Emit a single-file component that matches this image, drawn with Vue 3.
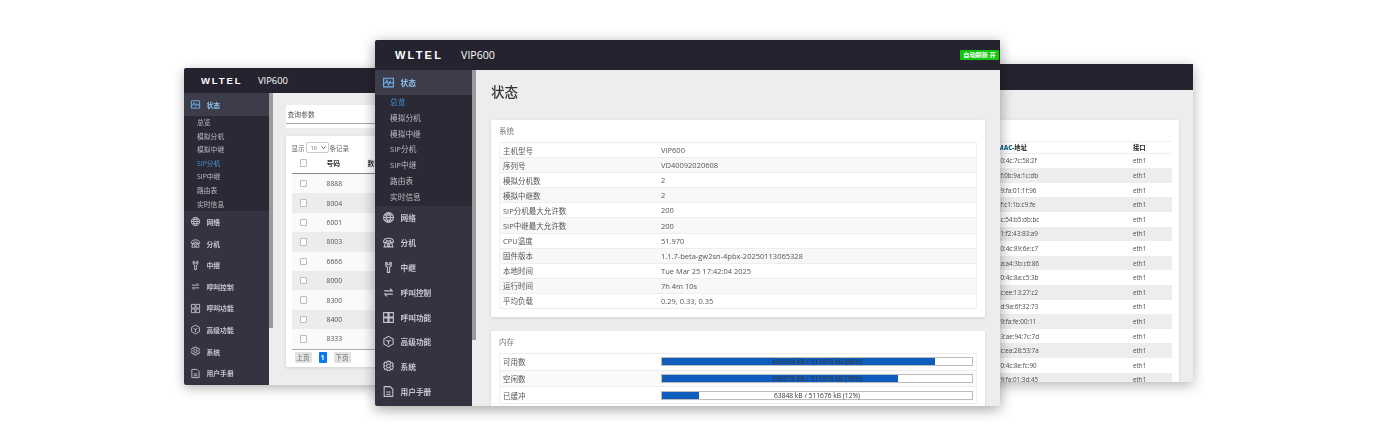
<script setup>
const subItems = ['总览', '模拟分机', '模拟中继', 'SIP分机', 'SIP中继', '路由表', '实时信息']
const navItems = [
  { label: '网络', icon: 'globe' },
  { label: '分机', icon: 'phone' },
  { label: '中继', icon: 'trunk' },
  { label: '呼叫控制', icon: 'swap' },
  { label: '呼叫功能', icon: 'grid' },
  { label: '高级功能', icon: 'cube' },
  { label: '系统', icon: 'gear' },
  { label: '用户手册', icon: 'doc' },
]
const iconPaths = {
  status: 'M3 4h18v16H3z M3 13h4l2-5 3 8 3-6 1.500 3H21',
  globe: 'M12 3a9 9 0 1 0 0 18a9 9 0 1 0 0-18z M12 3c-5 5-5 13 0 18 M12 3c5 5 5 13 0 18 M3 12h18 M5 7.500h14 M5 16.500h14',
  phone: 'M3 10c0-3.500 4-6 9-6s9 2.500 9 6v2h-5V9H8v3H3z M6 13h12l2 7H4z M12 14.500a2 2 0 1 0 0 4a2 2 0 1 0 0-4z',
  trunk: 'M7 3v6l3 2v10h4V11l3-2V3h-2.500v4h-5V3z',
  swap: 'M4 9h15l-4-4 M20 15H5l4 4',
  grid: 'M3 3h8v8H3z M13 3h8v8h-8z M3 13h8v8H3z M13 13h8v8h-8z',
  cube: 'M12 2.500l8.500 4.800v9.400L12 21.500l-8.500-4.800V7.300z M12 12L7.500 9.500 M12 12l4.500-2.500 M12 12v5.500',
  gear: 'M9.500 2.500h5l1 3 3-1 2.500 4.300-2.300 2.200 2.300 2.200-2.500 4.300-3-1-1 3h-5l-1-3-3 1L3 12.700 5.300 10.500 3 8.300l2.500-4.300 3 1z M12 7.500a3.500 3.500 0 1 0 0 7a3.500 3.500 0 1 0 0-7z',
  doc: 'M4 3h11l5 5v13H4z M8 13h8 M8 17h8',
}
const sideWindows = [
  { key: 'back', activeSub: 'SIP分机' },
  { key: 'front', activeSub: '总览' },
]

const numbers = ['8888', '8004', '6001', '8003', '6666', '8000', '8300', '8400', '8333']

const systemRows = [
  ['主机型号', 'VIP600'],
  ['序列号', 'VD40092020608'],
  ['模拟分机数', '2'],
  ['模拟中继数', '2'],
  ['SIP分机最大允许数', '200'],
  ['SIP中继最大允许数', '200'],
  ['CPU温度', '51.970'],
  ['固件版本', '1.1.7-beta-gw2sn-4pbx-20250113065328'],
  ['本地时间', 'Tue Mar 25 17:42:04 2025'],
  ['运行时间', '7h 4m 10s'],
  ['平均负载', '0.29, 0.33, 0.35'],
]
const memoryRows = [
  { label: '可用数', used: 453924, pct: 88 },
  { label: '空闲数', used: 390076, pct: 76 },
  { label: '已缓冲', used: 63848, pct: 12 },
]
const macs = [
  '00:e0:4c:7c:58:2f', '00:1f:0b:9a:1c:db', '00:19:fa:01:1f:96', '00:1f:c1:1b:c9:fe',
  '00:1c:54:b5:db:bc', '00:21:f2:43:83:a9', '00:e0:4c:89:6e:c7', '00:1a:a4:3b:c6:86',
  '00:e0:4c:8a:c5:3b', '00:1c:ee:13:27:c2', '00:1d:9a:6f:32:73', '00:19:fa:fe:00:11',
  '00:13:ae:94:7c:7d', '00:1c:ea:28:53:7a', '00:e0:4c:8e:fc:90', '00:19:fa:01:3d:45',
]
</script>

<template>
  <main class="stage">
    <!-- right window, mostly behind the front one -->
    <section class="win win-right">
      <header class="topbar"></header>
      <div class="right-body">
        <div class="card right-card">
          <div class="mac-row mac-head">
            <span><b class="mac-word">MAC</b>-地址</span>
            <span>接口</span>
          </div>
          <div v-for="m in macs" :key="m" class="mac-row">
            <span>{{ m }}</span>
            <span>eth1</span>
          </div>
        </div>
      </div>
    </section>

    <section v-for="w in sideWindows" :key="w.key" class="win" :class="'win-' + w.key">
      <header class="topbar">
        <span class="brand">WLTEL</span>
        <span class="model">VIP600</span>
        <span v-if="w.key === 'front'" class="refresh">自动刷新 开</span>
      </header>
      <div class="body">
        <aside class="side">
          <nav class="menu">
            <div class="nav-item active-group">
              <svg class="icon status" viewBox="0 0 24 24"><path :d="iconPaths.status" /></svg>
              <span>状态</span>
            </div>
            <div class="sub">
              <a v-for="s in subItems" :key="s" class="sub-item" :class="{ on: s === w.activeSub }">{{ s }}</a>
            </div>
            <div v-for="n in navItems" :key="n.label" class="nav-item">
              <svg class="icon" viewBox="0 0 24 24"><path :d="iconPaths[n.icon]" /></svg>
              <span>{{ n.label }}</span>
            </div>
          </nav>
          <div class="scroll-track"><div class="scroll-thumb"></div></div>
        </aside>

        <div v-if="w.key === 'back'" class="content back-content">
          <div class="query">
            <div class="query-title">查询参数</div>
          </div>
          <div class="card list-card">
            <div class="list-tools">
              <span>显示</span>
              <span class="page-size">10
                <svg viewBox="0 0 10 6"><path d="M1 1l4 4 4-4" /></svg>
              </span>
              <span>条记录</span>
            </div>
            <div class="num-row num-head">
              <i class="check"></i><b>号码</b><b>数字</b>
            </div>
            <div v-for="n in numbers" :key="n" class="num-row">
              <i class="check"></i><span>{{ n }}</span><span></span>
            </div>
            <div class="pager">
              <span class="page-btn">上页</span>
              <span class="page-cur">1</span>
              <span class="page-btn">下页</span>
            </div>
          </div>
        </div>

        <div v-else class="content front-content">
          <h1 class="title">状态</h1>
          <div class="card info-card">
            <div class="card-title">系统</div>
            <div class="kv-table">
              <div v-for="r in systemRows" :key="r[0]" class="kv-row">
                <span>{{ r[0] }}</span>
                <span>{{ r[1] }}</span>
              </div>
            </div>
          </div>
          <div class="card mem-card">
            <div class="card-title">内存</div>
            <div class="kv-table">
              <div v-for="r in memoryRows" :key="r.label" class="kv-row mem-row">
                <span>{{ r.label }}</span>
                <div class="bar">
                  <div class="bar-fill" :style="{ width: r.pct + '%' }"></div>
                  <span class="bar-text">{{ r.used }} kB / 511676 kB ({{ r.pct }}%)</span>
                </div>
              </div>
            </div>
          </div>
        </div>
      </div>
    </section>
  </main>
</template>

<style>
html, body {
  background: #fff;
}
</style>

<style scoped>
.stage {
  position: relative;
  width: 1380px;
  height: 440px;
  overflow: hidden;
  background: #fff;
  font-family: "Open Sans", "Noto Sans CJK SC", sans-serif;
  color: #444;
}

/* the three screenshots sit on a free canvas */
.win {
  position: absolute;
  display: flex;
  flex-direction: column;
  overflow: hidden;
  background: #ededed;
  box-shadow: 0 3px 12px rgba(0, 0, 0, 0.3);
  filter: blur(0.35px);
}
.win-back {
  left: 184px;
  top: 68px;
  width: 230px;
  height: 317px;
  border-radius: 2px 0 0 2px;
  --bar-h: 25px;
  --side-w: 85px;
  --scroll-w: 3.5px;
  --thumb-h: 235px;
  --nav-h: 21.600px;
  --active-h: 23px;
  --sub-h: 13.600px;
  --sub-pad: 0 0 0 13px;
  --nav-pad: 6px;
  --nav-gap: 5.500px;
  --icon: 11px;
  --side-font: 6.800px;
}
.win-front {
  left: 375px;
  top: 40px;
  width: 625px;
  height: 366px;
  z-index: 2;
  border-radius: 2px 0 0 2px;
  box-shadow: 0 3px 14px rgba(0, 0, 0, 0.38);
  --bar-h: 30px;
  --side-w: 97px;
  --scroll-w: 4px;
  --thumb-h: 270px;
  --nav-h: 24.800px;
  --active-h: 25px;
  --sub-h: 15.800px;
  --sub-pad: 0 0 0 15px;
  --nav-pad: 6.500px;
  --nav-gap: 6px;
  --icon: 13px;
  --side-font: 7.700px;
}
.win-right {
  left: 960px;
  top: 64px;
  width: 233px;
  height: 318px;
}

.topbar {
  flex: none;
  display: flex;
  align-items: center;
  height: var(--bar-h, 26px);
  background: #25232f;
  color: #fff;
}
.brand {
  font-family: "Liberation Sans", sans-serif;
  font-weight: 700;
}
.model {
  font-family: "Open Sans", sans-serif;
  font-weight: 500;
}
.win-back .brand { margin-left: 17px; font-size: 9.500px; letter-spacing: 1.900px; }
.win-back .model { margin-left: 15.500px; font-size: 9.400px; }
.win-front .brand { margin-left: 20px; font-size: 11px; letter-spacing: 2.200px; }
.win-front .model { margin-left: 18px; font-size: 10.600px; }
.refresh {
  flex: none;
  width: 39px;
  height: 10.500px;
  margin-left: auto;
  margin-right: 1px;
  line-height: 10.500px;
  text-align: center;
  border-radius: 1px;
  background: #13c70f;
  color: #fff;
  font-size: 6.200px;
  font-weight: 700;
  white-space: nowrap;
}

.body {
  flex: 1;
  display: flex;
  min-height: 0;
}
.side {
  flex: none;
  display: flex;
  width: calc(var(--side-w) + var(--scroll-w));
}
.menu {
  width: var(--side-w);
  background: #343341;
  color: #c6c6ce;
  font-size: var(--side-font);
}
.nav-item {
  display: flex;
  align-items: center;
  gap: var(--nav-gap);
  height: var(--nav-h);
  padding-left: var(--nav-pad);
  font-weight: 700;
  white-space: nowrap;
}
.active-group {
  height: var(--active-h);
  background: #3c3c4b;
  color: #8fc0ea;
}
.sub {
  background: #2a2a36;
}
.sub-item {
  display: block;
  height: var(--sub-h);
  line-height: var(--sub-h);
  padding: var(--sub-pad);
  color: #bcbcc4;
  white-space: nowrap;
}
.sub-item.on {
  color: #4d90cf;
}
.icon {
  flex: none;
  width: var(--icon);
  height: var(--icon);
  fill: none;
  stroke: #c4c4cc;
  stroke-width: 2;
}
.icon.status {
  stroke: #6db7ef;
}
.scroll-track {
  width: var(--scroll-w);
  background: #ededed;
}
.scroll-thumb {
  height: var(--thumb-h);
  background: #9a9a9a;
}

.content {
  flex: 1;
  min-width: 0;
  overflow: hidden;
}
.card {
  background: #fff;
  box-shadow: 0 1px 3px rgba(0, 0, 0, 0.12);
}

/* back left window */
.back-content {
  padding: 12px 0 0 13px;
  font-size: 6.800px;
}
.query {
  width: 200px;
  height: 23px;
  background: #fff;
}
.query-title {
  height: 17.500px;
  line-height: 20px;
  padding-left: 2px;
  border-bottom: 1px solid #aaa;
  color: #555;
}
.list-card {
  width: 200px;
  height: 231px;
  margin-top: 8px;
  padding: 6px 0 0 6px;
  box-sizing: border-box;
}
.list-tools {
  display: flex;
  align-items: center;
  gap: 1px;
  height: 11px;
  color: #666;
  font-size: 6.500px;
}
.page-size {
  display: flex;
  align-items: center;
  justify-content: space-between;
  width: 23px;
  height: 11px;
  padding: 0 2px 0 4px;
  box-sizing: border-box;
  border: 1px solid #ccc;
  border-radius: 2px;
  font-size: 5.500px;
}
.page-size svg {
  width: 5px;
  height: 3px;
  fill: none;
  stroke: #444;
  stroke-width: 1.800;
}
.num-row {
  display: grid;
  grid-template-columns: 35px 41px 1fr;
  align-items: center;
  height: 19.400px;
  color: #555;
  font-size: 6.800px;
}
.num-row:nth-child(odd) {
  background: #fafafa;
}
.num-row:nth-child(even) {
  background: #ececec;
}
.num-head.num-head {
  height: 20px;
  background: #fff;
  border-bottom: 1px solid #888;
  color: #333;
}
.check {
  justify-self: center;
  width: 5.500px;
  height: 5.500px;
  margin-left: -11px;
  background: #fff;
  border: 1px solid #bbb;
  border-radius: 1px;
}
.pager {
  display: flex;
  align-items: flex-start;
  gap: 7px;
  height: 18px;
  padding: 2px 0 0 3px;
  box-sizing: border-box;
  border-top: 1px solid #aaa;
}
.page-btn {
  width: 17px;
  height: 11px;
  line-height: 11px;
  text-align: center;
  background: #e2e2e2;
  border-radius: 1px;
  color: #666;
  font-size: 6.500px;
}
.page-cur {
  width: 8px;
  height: 11px;
  line-height: 11px;
  text-align: center;
  background: #0a78f0;
  border-radius: 1px;
  color: #fff;
  font-size: 6.500px;
  font-weight: 700;
}

/* front window */
.front-content {
  padding: 0 15px 0 15px;
}
.title {
  margin: 0;
  height: 50px;
  padding-top: 12px;
  box-sizing: border-box;
  font-size: 13.500px;
  font-weight: 500;
  line-height: 20px;
  color: #333;
}
.info-card {
  height: 197px;
  padding: 0 8px;
}
.card-title {
  height: 22px;
  line-height: 23px;
  font-size: 7.500px;
  color: #777;
}
.kv-table {
  border-top: 1px solid #eee;
  border-left: 1px solid #f2f2f2;
  border-right: 1px solid #f2f2f2;
}
.kv-row {
  display: grid;
  grid-template-columns: 158px 1fr;
  align-items: center;
  height: 15.100px;
  padding-left: 3px;
  font-size: 7.500px;
  color: #555;
  border-bottom: 1px solid #eee;
  box-sizing: border-box;
  background: #fff;
}
.kv-row:nth-child(even) {
  background: #f8f8f8;
}
.mem-card {
  margin-top: 14px;
  height: 100px;
  padding: 0 8px;
}
.mem-row {
  height: 16.700px;
  background: #fff;
}
.mem-row:nth-child(even) {
  background: #fafafa;
}
.bar {
  position: relative;
  height: 7px;
  margin-right: 3px;
  background: #fff;
  border: 1px solid #bbb;
}
.bar-fill {
  height: 100%;
  background: #0f5cbc;
}
.bar-text {
  position: absolute;
  inset: 0;
  line-height: 7px;
  text-align: center;
  font-size: 6.700px;
  color: #333;
  white-space: nowrap;
}

/* right window */
.right-body {
  height: 100%;
  padding: 30px 14px 0 15px;
  box-sizing: border-box;
}
.right-card {
  height: 262px;
  padding: 21px 7px 0 7px;
  overflow: hidden;
}
.mac-row {
  display: grid;
  grid-template-columns: 145px 1fr;
  align-items: center;
  height: 14.600px;
  padding-left: 6px;
  font-size: 6.300px;
  color: #4a4a4a;
  background: #fff;
}
.mac-row:nth-child(odd) {
  background: #ededed;
}
.mac-head.mac-head {
  grid-template-columns: 135.400px 1fr;
  height: 12.700px;
  padding-left: 15.600px;
  border-top: 1px solid #f0f0f0;
  border-bottom: 1px solid #eee;
  box-sizing: border-box;
  font-weight: 700;
  color: #222;
  background: #fff;
}
.mac-word {
  color: #1c6d92;
}
</style>
